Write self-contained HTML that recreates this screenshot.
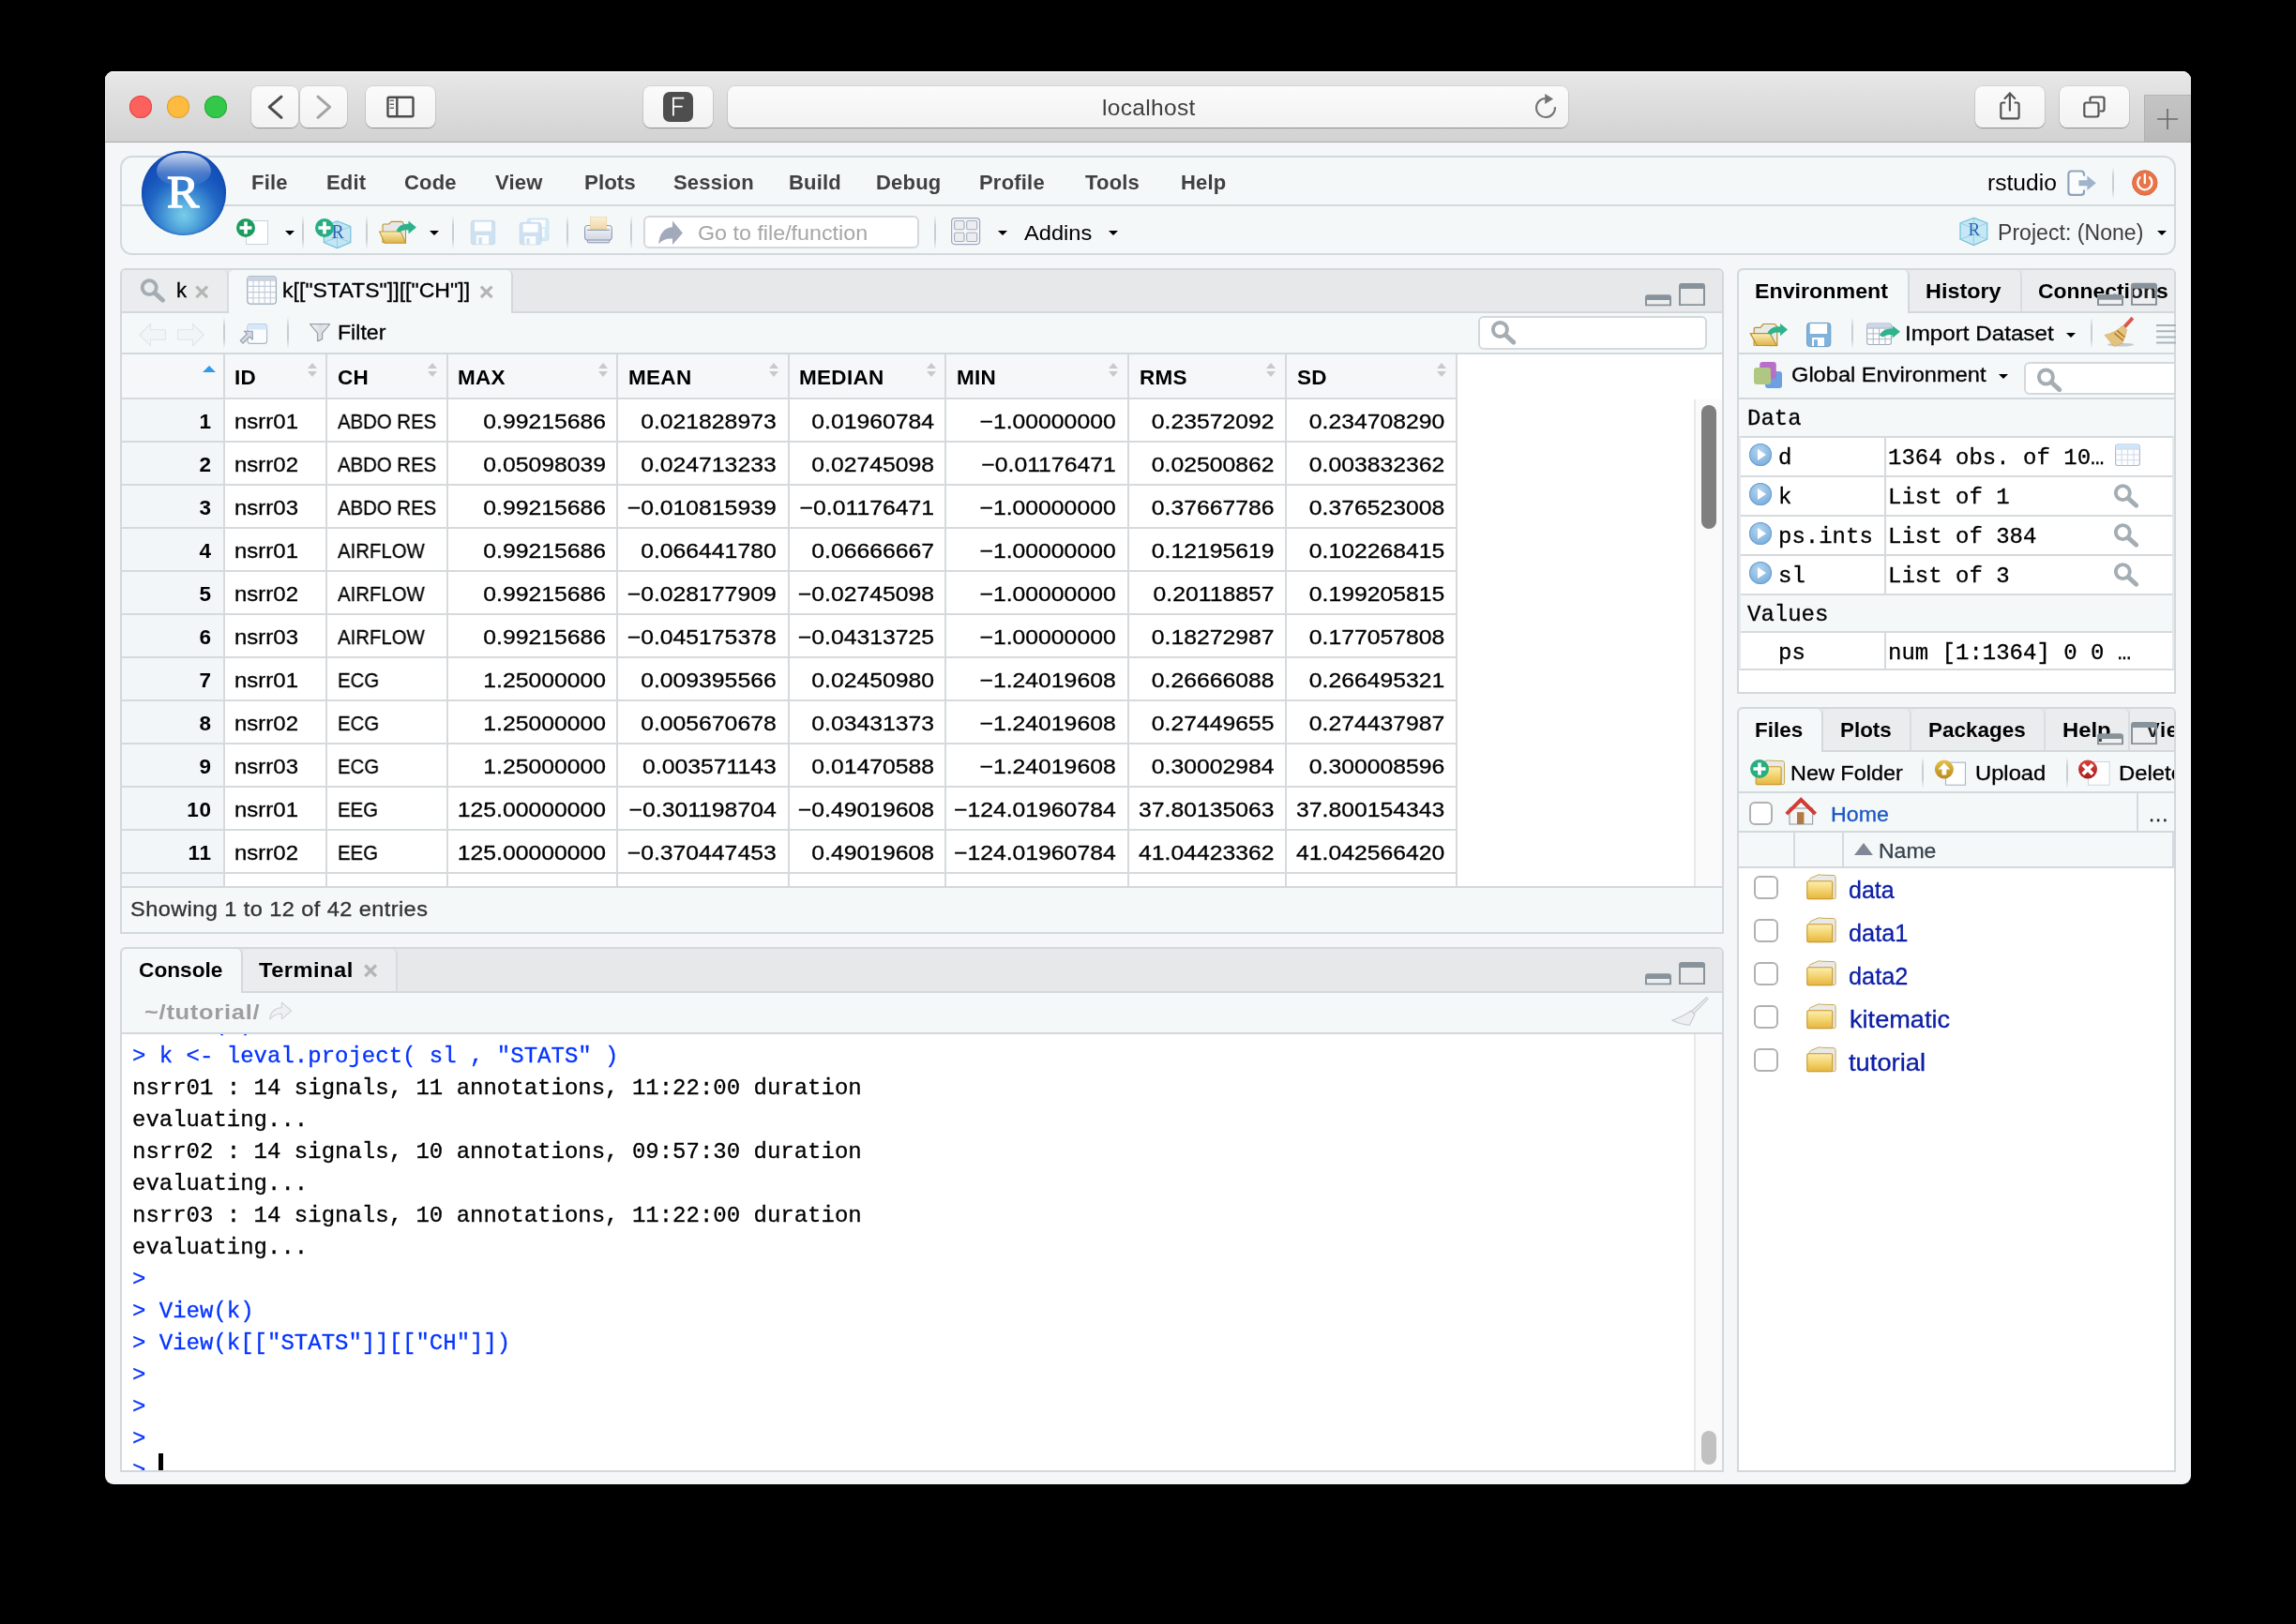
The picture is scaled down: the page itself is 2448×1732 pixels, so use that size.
<!DOCTYPE html>
<html><head><meta charset="utf-8"><title>RStudio</title>
<style>
*{box-sizing:border-box;margin:0;padding:0}
html,body{width:2448px;height:1732px;background:#000;overflow:hidden}
body{font-family:"Liberation Sans",sans-serif;position:relative;color:#000}
#w{position:absolute;left:0;top:0;width:2448px;height:1732px;background:#f4f6f8;clip-path:inset(76px 112px 149px 112px round 9px)}
.a{position:absolute}
.t,.c,.et,.fn,pre{will-change:transform}
.t{position:absolute;white-space:nowrap;line-height:1}
.mono{font-family:"Liberation Mono",monospace}
/* safari chrome */
#tb{position:absolute;left:112px;top:76px;width:2224px;height:76px;background:linear-gradient(#e9e9e9,#e3e3e3 20%,#d2d2d2);border-bottom:1px solid #a9a9a9;box-shadow:inset 0 1.5px 0 #f7f7f7,inset 1px 0 0 #efefef}
.sb{position:absolute;top:92px;height:44px;border-radius:8px;background:linear-gradient(#fbfbfb,#f2f2f2);box-shadow:0 1px 1px rgba(0,0,0,.28),0 0 0 1px rgba(0,0,0,.07)}
/* rstudio */
.pn{position:absolute;border:2px solid #d3d8dc;border-radius:6px 6px 0 0;background:#fff;overflow:hidden}
.tabbar{position:absolute;left:0;top:0;right:0;height:46px;background:#e6e8ea;border-bottom:2px solid #d3d8dc}
.tab{position:absolute;top:0;height:46px;border-right:2px solid #d9dcdf;background:#ebeced;border-radius:6px 6px 0 0}
.tab.on{background:#f4f8f9;border-right:2px solid #d3d8dc}
.bar{position:absolute;left:0;right:0;background:#f4f8f9;border-bottom:2px solid #d3d8dc}
.sep{position:absolute;width:2px;background:linear-gradient(rgba(200,205,210,0),#c9ced3 30%,#c9ced3 70%,rgba(200,205,210,0))}
.tri{position:absolute;width:0;height:0;border-left:5.3px solid transparent;border-right:5.3px solid transparent;border-top:5.6px solid #000}
.ui{font-size:22px;letter-spacing:.9px}
.ui,.c,.fn,.et,pre{-webkit-text-stroke:.3px}
.b,.c.h{font-weight:bold;-webkit-text-stroke:0}
</style></head>
<body>
<div id="w">
<!-- Safari title bar -->
<div id="tb"></div>
<div class="a" style="left:138px;top:102px;width:24px;height:24px;border-radius:50%;background:#fc615d;box-shadow:inset 0 0 0 1px #df4744"></div>
<div class="a" style="left:178px;top:102px;width:24px;height:24px;border-radius:50%;background:#fdbc40;box-shadow:inset 0 0 0 1px #de9f34"></div>
<div class="a" style="left:218px;top:102px;width:24px;height:24px;border-radius:50%;background:#34c84a;box-shadow:inset 0 0 0 1px #27aa35"></div>
<div class="sb" style="left:268px;width:50px"></div>
<div class="sb" style="left:320px;width:50px"></div>
<div class="sb" style="left:390px;width:74px"></div>
<div class="sb" style="left:686px;width:74px"></div>
<div class="sb" style="left:776px;width:896px"></div>
<div class="sb" style="left:2106px;width:74px"></div>
<div class="sb" style="left:2196px;width:74px"></div>
<div class="a" style="left:2286px;top:101px;width:50px;height:50px;background:linear-gradient(#c4c4c4,#b9b9b9);border-left:1px solid #b0b0b0;border-top:1px solid #b4b4b4"></div>
<svg class="a" style="left:112px;top:76px" width="2224" height="76" viewBox="112 76 2224 76" fill="none">
 <path d="M300 103.2 L287.2 114.2 L300 125.3" stroke="#4c4c4c" stroke-width="3" stroke-linecap="round" stroke-linejoin="round"/>
 <path d="M339 103.2 L351.6 114.2 L339 125.3" stroke="#a3a3a3" stroke-width="3" stroke-linecap="round" stroke-linejoin="round"/>
 <rect x="413.5" y="103.8" width="27" height="20.5" rx="1.5" stroke="#4c4c4c" stroke-width="2.4"/>
 <path d="M423.3 104 V124" stroke="#4c4c4c" stroke-width="2.4"/>
 <path d="M415.6 107.2 H420 M415.6 111.2 H420 M415.6 115.2 H420" stroke="#6a6a6a" stroke-width="1.6"/>
 <rect x="707" y="98" width="32" height="32" rx="7" fill="#4e4e4e"/>
 <path d="M717.9 123.6 V104.7 H729.3 M717.9 113.6 H727.7" stroke="#fff" stroke-width="1.8"/>
 <!-- reload -->
 <path d="M1657.96 114.1 A10 10 0 1 1 1647.6 105" stroke="#747474" stroke-width="2.1"/>
 <path d="M1647.2 99.9 L1656.1 105.4 L1647.2 111 Z" fill="#747474"/>
 <!-- share -->
 <path d="M2138.2 109.5 H2135.3 q-2 0 -2 2 V124.4 q0 2 2 2 H2150.6 q2 0 2 -2 V111.5 q0 -2 -2 -2 H2147.600" stroke="#555" stroke-width="2.200"/>
 <path d="M2142.9 117.700 V99.400 M2137.600 104.900 L2142.900 99.400 L2148.200 104.900" stroke="#555" stroke-width="2.200" stroke-linecap="round" stroke-linejoin="round"/>
 <!-- tabs -->
 <path d="M2228.500 107.600 V105.500 q0 -2 2 -2 H2241.500 q2 0 2 2 V116.500 q0 2 -2 2 H2239.600" stroke="#555" stroke-width="2.200" stroke-linecap="round"/>
 <rect x="2222.300" y="109.500" width="15.200" height="15" rx="2.200" stroke="#555" stroke-width="2.200"/>
 <!-- plus -->
 <path d="M2300 127 H2322 M2311 116 V138" stroke="#6c6c6c" stroke-width="1.7"/>
</svg>
<div class="t" id="url" style="left:1175px;top:103px;font-size:24.5px;color:#3f3f3f;letter-spacing:.32px">localhost</div>
<!-- RStudio main toolbar -->
<div class="a" style="left:128px;top:166px;width:2192px;height:106px;border:2px solid #d3d8dc;border-radius:13px;background:#f4f8f9"></div>
<div class="a" style="left:130px;top:218px;width:2188px;height:2px;background:#d3d8dc"></div>
<!-- R logo -->
<div class="a" style="left:151px;top:161px;width:90px;height:90px;border-radius:50%;background:radial-gradient(circle at 50% 76%,#78cde9 0%,#60b5e1 13%,#3d8cd3 30%,#2166c5 46%,#1653bb 62%,#1049b2 100%);box-shadow:inset 0 0 3px #0b3f9e"></div>
<div class="a" style="left:167px;top:163px;width:58px;height:36px;border-radius:50%/55% 55% 45% 45%;background:linear-gradient(rgba(255,255,255,.78),rgba(255,255,255,.22) 60%,rgba(255,255,255,.04))"></div>
<div class="t" style="left:178.200px;top:180px;font-family:'Liberation Serif',serif;font-size:49px;color:#fff;-webkit-text-stroke:1.300px #fff;transform:scaleX(1.05);transform-origin:0 50%">R</div>
<!-- menus -->
<div class="t b m" style="left:268px">File</div>
<div class="t b m" style="left:348px">Edit</div>
<div class="t b m" style="left:431px">Code</div>
<div class="t b m" style="left:528px">View</div>
<div class="t b m" style="left:623px;letter-spacing:0;transform:scaleX(1.019);transform-origin:0 50%">Plots</div>
<div class="t b m" style="left:718px">Session</div>
<div class="t b m" style="left:841px">Build</div>
<div class="t b m" style="left:934px">Debug</div>
<div class="t b m" style="left:1044px">Profile</div>
<div class="t b m" style="left:1157px">Tools</div>
<div class="t b m" style="left:1259px">Help</div>
<style>.m{top:184px;font-size:22px;color:#404040;letter-spacing:.2px}</style>
<div class="t" style="left:2119px;top:184px;font-size:23px;letter-spacing:0;transform:scaleX(1.07);transform-origin:0 50%">rstudio</div>
<div class="t" style="left:2130px;top:236.5px;font-size:23px;letter-spacing:.05px;color:#3c3c3c">Project: (None)</div>
<div class="tri" style="left:2299.7px;top:246px"></div>
<div class="sep" style="left:2252px;top:178px;height:34px"></div>
<!-- second row separators -->
<div class="sep" style="left:322px;top:230px;height:36px"></div>
<div class="sep" style="left:390px;top:230px;height:36px"></div>
<div class="sep" style="left:482px;top:230px;height:36px"></div>
<div class="sep" style="left:604px;top:230px;height:36px"></div>
<div class="sep" style="left:672px;top:230px;height:36px"></div>
<div class="sep" style="left:996px;top:230px;height:36px"></div>
<div class="tri" style="left:303.7px;top:246px"></div>
<div class="tri" style="left:457.7px;top:246px"></div>
<div class="tri" style="left:1063.7px;top:246px"></div>
<div class="tri" style="left:1181.7px;top:246px"></div>
<div class="a" style="left:686px;top:229.5px;width:294px;height:35.5px;border:2px solid #d3d8dc;border-radius:6px;background:#fff"></div>
<div class="t" style="left:744px;top:238px;font-size:22px;color:#a6a6a6;letter-spacing:0;transform:scaleX(1.058);transform-origin:0 50%">Go to file/function</div>
<div class="t" style="left:1092px;top:237.5px;font-size:22.5px;letter-spacing:0;transform:scaleX(1.051);transform-origin:0 50%">Addins</div>
<svg class="a" style="left:240px;top:225px" width="2090" height="46" viewBox="240 225 2090 46" fill="none">
<defs>
 <linearGradient id="gFold" x1="0" y1="0" x2="0" y2="1"><stop offset="0" stop-color="#f9eeb8"/><stop offset="1" stop-color="#deb044"/></linearGradient>
 <linearGradient id="gPrn" x1="0" y1="0" x2="0" y2="1"><stop offset="0" stop-color="#f6f8fb"/><stop offset="1" stop-color="#cfd5e2"/></linearGradient>
 <linearGradient id="gPap" x1="0" y1="0" x2="0" y2="1"><stop offset="0" stop-color="#fbf0d8"/><stop offset="1" stop-color="#eed6a4"/></linearGradient>
 <g id="plusG"><circle r="10" /><path d="M-6.5 0 H6.5 M0 -6.5 V6.5" stroke="#fff" stroke-width="3.6"/></g>
</defs>
<!-- new file -->
<rect x="262.5" y="235.5" width="23" height="25" fill="#fff" stroke="#c9d2de" stroke-width="1"/>
<use href="#plusG" x="262" y="243" fill="#1d9b5e"/>
<!-- new project -->
<path d="M359.5 235.8 L373.8 241.5 V258.5 L359.5 264.6 L345.3 258.5 V241.5 Z" fill="#c4e6f4" stroke="#72c2de" stroke-width="1.2"/>
<path d="M345.3 241.5 L359.5 247.5 L373.8 241.5 M359.5 247.5 V264.6 M345.3 258.5 L359.5 253 L373.8 258.5 M359.5 235.8 V253" stroke="#8ccde4" stroke-width=".9"/>
<text x="353.6" y="254.3" font-family="Liberation Serif" font-size="20" fill="#2c63b4">R</text>
<use href="#plusG" x="346" y="243" fill="#27ae80"/>
<!-- open folder -->
<path d="M408 258.5 V240.3 q0-1.3 1.3-1.3 h5.4 l2.6-2.6 h10.4 q1.8 0 2.3 1.6 l.9 2.6 h1.6 v18 z" fill="#e7e7e7" stroke="#bb9430" stroke-width="1.1"/>
<path d="M404.6 247 H427.2 L432.6 259.3 H410 Z" fill="url(#gFold)" stroke="#c39b2e" stroke-width="1.1"/>
<path d="M422.4 246.200 Q426.500 238 435.500 238.800 V235.600 L443.900 242.400 L435.500 249.400 V245.600 Q429.500 244.400 425.800 247.800 Z" fill="#2db38b"/>
<!-- save (disabled) -->
<rect x="502.3" y="235.3" width="25.4" height="25.4" rx="2.5" fill="#cfe0f0" stroke="#c3d6ea" stroke-width=".8"/>
<rect x="506" y="236.6" width="18" height="10" fill="#fbfdfe"/>
<rect x="507.8" y="251" width="13.4" height="9.4" fill="#fbfdfe"/>
<rect x="510.2" y="253.2" width="3.7" height="7.2" fill="#cfe0f0"/>
<!-- save all (disabled) -->
<rect x="562.3" y="233" width="22.6" height="23.6" rx="2.5" fill="#d3ebf5" stroke="#c6dfee" stroke-width=".8"/>
<rect x="566" y="234.4" width="15.6" height="8" fill="#fbfdfe"/>
<rect x="578" y="244" width="2.6" height="9" fill="#fbfdfe"/>
<rect x="554.2" y="237.4" width="22.8" height="23.4" rx="2.5" fill="#cfe0f0" stroke="#c3d6ea" stroke-width=".8"/>
<rect x="557.6" y="238.8" width="16" height="9" fill="#fbfdfe"/>
<rect x="559.3" y="252" width="12" height="8.500" fill="#fbfdfe"/>
<rect x="561.400" y="254.2" width="3.200" height="6.300" fill="#cfe0f0"/>
<!-- print -->
<rect x="626.3" y="255" width="23.500" height="3.800" rx="1" fill="#dfe3ec" stroke="#8492ab" stroke-width="1"/>
<path d="M623.600 243.200 q0-2.700 2.700-2.700 h23.300 q2.700 0 2.700 2.700 v10.600 q0 2.200 -2.200 2.200 h-24.300 q-2.200 0 -2.200-2.200z" fill="url(#gPrn)" stroke="#8492ab" stroke-width="1"/>
<rect x="629.300" y="231.300" width="17.500" height="13.700" fill="url(#gPap)" stroke="#e8cf9c" stroke-width=".6"/>
<path d="M626 245.300 H650" stroke="#8492ab" stroke-width="1"/>
<!-- goto arrow -->
<path d="M702.2 260.2 Q703.4 243.6 717 241.9 V235.5 L727.9 248.5 L717 261 V254.5 Q707.6 253.7 702.2 260.2 Z" fill="#a2a9ba"/>
<!-- grid -->
<rect x="1014.600" y="232.600" width="30" height="28" rx="3.500" fill="#f4f6f8" stroke="#9eabbc" stroke-width="1.2"/>
<g fill="#ededf0" stroke="#a3afbf" stroke-width="1.1"><rect x="1017.600" y="235.500" width="10.400" height="9.300" rx="1.500"/><rect x="1030.700" y="235.500" width="11" height="9.300" rx="1.500"/><rect x="1017.600" y="248.200" width="10.400" height="9.300" rx="1.500"/><rect x="1030.700" y="248.200" width="11" height="9.300" rx="1.500"/></g>
</svg>
<!-- Source panel -->
<div class="pn" id="src" style="left:128px;top:286px;width:1710px;height:710px">
<div class="tabbar" style="height:45.5px"></div>
<div class="tab" style="left:0;width:114px;height:43.500px"></div>
<div class="tab on" style="left:114px;width:303px;height:46px"></div>
<div class="t ui" style="left:57.6px;top:11px;letter-spacing:0">k</div>
<div class="t ui" id="tabt" style="left:171px;top:11px;letter-spacing:0;transform:scaleX(1.05);transform-origin:0 50%">k[["STATS"]][["CH"]]</div>
<div class="bar" style="top:45.5px;height:44.500px"></div>
<div class="sep" style="left:108px;top:50px;height:34px"></div>
<div class="sep" style="left:176px;top:50px;height:34px"></div>
<div class="t ui" style="left:230px;top:56px;letter-spacing:0;transform:scaleX(1.051);transform-origin:0 50%">Filter</div>
<div class="a" style="left:1446px;top:49px;width:244px;height:36px;border:2px solid #d3d8dc;border-radius:6px;background:#fff"></div>
<div class="a" style="left:0;top:90px;width:1423.6px;height:46px;background:#f6f7f9"></div>
<div class="a" style="left:0;top:136px;width:108px;height:522px;background:#f3f6f8"></div>
<div class="a hl" style="top:135.9px"></div>
<div class="a hl" style="top:181.9px"></div>
<div class="a hl" style="top:227.9px"></div>
<div class="a hl" style="top:273.9px"></div>
<div class="a hl" style="top:319.9px"></div>
<div class="a hl" style="top:365.9px"></div>
<div class="a hl" style="top:411.9px"></div>
<div class="a hl" style="top:457.9px"></div>
<div class="a hl" style="top:503.9px"></div>
<div class="a hl" style="top:549.9px"></div>
<div class="a hl" style="top:595.9px"></div>
<div class="a hl" style="top:641.9px"></div>
<div class="a vl" style="left:107.5px"></div>
<div class="a vl" style="left:217.3px"></div>
<div class="a vl" style="left:345.5px"></div>
<div class="a vl" style="left:527.3px"></div>
<div class="a vl" style="left:709.7px"></div>
<div class="a vl" style="left:877.4px"></div>
<div class="a vl" style="left:1071.8px"></div>
<div class="a vl" style="left:1240px"></div>
<div class="a vl" style="left:1422px"></div>
<style>.hl{left:0;width:1423.6px;height:2px;background:#d6dadd}.vl{top:90px;width:2px;height:568px;background:#d6dadd}.c{position:absolute;white-space:nowrap;line-height:1;font-size:22.5px}.n{text-align:right;transform:scaleX(1.1);transform-origin:100% 50%}.lc{transform:scaleX(1.066);transform-origin:0 50%}.uc{transform:scaleX(.905);transform-origin:0 50%}.h{font-weight:bold;letter-spacing:.3px}.so{position:absolute;width:0;height:0;border-left:5.500px solid transparent;border-right:5.500px solid transparent}.su{border-bottom:6px solid #c9c9c9}.sd{border-top:6px solid #c9c9c9}</style>
<div class="c h" style="left:120.2px;top:103.5px">ID</div>
<div class="so su" style="left:197.7px;top:98.8px"></div><div class="so sd" style="left:197.7px;top:108px"></div>
<div class="c h" style="left:230.0px;top:103.5px">CH</div>
<div class="so su" style="left:325.9px;top:98.8px"></div><div class="so sd" style="left:325.9px;top:108px"></div>
<div class="c h" style="left:358.2px;top:103.5px">MAX</div>
<div class="so su" style="left:507.7px;top:98.8px"></div><div class="so sd" style="left:507.7px;top:108px"></div>
<div class="c h" style="left:540.0px;top:103.5px">MEAN</div>
<div class="so su" style="left:690.1px;top:98.8px"></div><div class="so sd" style="left:690.1px;top:108px"></div>
<div class="c h" style="left:722.4px;top:103.5px">MEDIAN</div>
<div class="so su" style="left:857.8px;top:98.8px"></div><div class="so sd" style="left:857.8px;top:108px"></div>
<div class="c h" style="left:890.1px;top:103.5px">MIN</div>
<div class="so su" style="left:1052.2px;top:98.8px"></div><div class="so sd" style="left:1052.2px;top:108px"></div>
<div class="c h" style="left:1084.5px;top:103.5px">RMS</div>
<div class="so su" style="left:1220.4px;top:98.8px"></div><div class="so sd" style="left:1220.4px;top:108px"></div>
<div class="c h" style="left:1252.7px;top:103.5px">SD</div>
<div class="so su" style="left:1402.4px;top:98.8px"></div><div class="so sd" style="left:1402.4px;top:108px"></div>
<div class="so" style="left:85.8px;top:102.2px;border-left-width:7.2px;border-right-width:7.2px;border-bottom:7.800px solid #2d9bf0"></div>
<div class="c b" style="left:0;width:95.6px;top:151.4px;text-align:right;letter-spacing:.6px">1</div>
<div class="c lc" style="left:119.9px;top:151.4px">nsrr01</div>
<div class="c uc" style="left:229.5px;top:151.4px">ABDO RES</div>
<div class="c n" style="left:346.5px;width:169.1px;top:151.4px">0.99215686</div>
<div class="c n" style="left:528.3px;width:169.7px;top:151.4px">0.021828973</div>
<div class="c n" style="left:710.7px;width:155.0px;top:151.4px">0.01960784</div>
<div class="c n" style="left:878.4px;width:181.7px;top:151.4px">−1.00000000</div>
<div class="c n" style="left:1072.8px;width:155.5px;top:151.4px">0.23572092</div>
<div class="c n" style="left:1241px;width:169.3px;top:151.4px">0.234708290</div>
<div class="c b" style="left:0;width:95.6px;top:197.4px;text-align:right;letter-spacing:.6px">2</div>
<div class="c lc" style="left:119.9px;top:197.4px">nsrr02</div>
<div class="c uc" style="left:229.5px;top:197.4px">ABDO RES</div>
<div class="c n" style="left:346.5px;width:169.1px;top:197.4px">0.05098039</div>
<div class="c n" style="left:528.3px;width:169.7px;top:197.4px">0.024713233</div>
<div class="c n" style="left:710.7px;width:155.0px;top:197.4px">0.02745098</div>
<div class="c n" style="left:878.4px;width:181.7px;top:197.4px">−0.01176471</div>
<div class="c n" style="left:1072.8px;width:155.5px;top:197.4px">0.02500862</div>
<div class="c n" style="left:1241px;width:169.3px;top:197.4px">0.003832362</div>
<div class="c b" style="left:0;width:95.6px;top:243.4px;text-align:right;letter-spacing:.6px">3</div>
<div class="c lc" style="left:119.9px;top:243.4px">nsrr03</div>
<div class="c uc" style="left:229.5px;top:243.4px">ABDO RES</div>
<div class="c n" style="left:346.5px;width:169.1px;top:243.4px">0.99215686</div>
<div class="c n" style="left:528.3px;width:169.7px;top:243.4px">−0.010815939</div>
<div class="c n" style="left:710.7px;width:155.0px;top:243.4px">−0.01176471</div>
<div class="c n" style="left:878.4px;width:181.7px;top:243.4px">−1.00000000</div>
<div class="c n" style="left:1072.8px;width:155.5px;top:243.4px">0.37667786</div>
<div class="c n" style="left:1241px;width:169.3px;top:243.4px">0.376523008</div>
<div class="c b" style="left:0;width:95.6px;top:289.4px;text-align:right;letter-spacing:.6px">4</div>
<div class="c lc" style="left:119.9px;top:289.4px">nsrr01</div>
<div class="c uc" style="left:229.5px;top:289.4px">AIRFLOW</div>
<div class="c n" style="left:346.5px;width:169.1px;top:289.4px">0.99215686</div>
<div class="c n" style="left:528.3px;width:169.7px;top:289.4px">0.066441780</div>
<div class="c n" style="left:710.7px;width:155.0px;top:289.4px">0.06666667</div>
<div class="c n" style="left:878.4px;width:181.7px;top:289.4px">−1.00000000</div>
<div class="c n" style="left:1072.8px;width:155.5px;top:289.4px">0.12195619</div>
<div class="c n" style="left:1241px;width:169.3px;top:289.4px">0.102268415</div>
<div class="c b" style="left:0;width:95.6px;top:335.4px;text-align:right;letter-spacing:.6px">5</div>
<div class="c lc" style="left:119.9px;top:335.4px">nsrr02</div>
<div class="c uc" style="left:229.5px;top:335.4px">AIRFLOW</div>
<div class="c n" style="left:346.5px;width:169.1px;top:335.4px">0.99215686</div>
<div class="c n" style="left:528.3px;width:169.7px;top:335.4px">−0.028177909</div>
<div class="c n" style="left:710.7px;width:155.0px;top:335.4px">−0.02745098</div>
<div class="c n" style="left:878.4px;width:181.7px;top:335.4px">−1.00000000</div>
<div class="c n" style="left:1072.8px;width:155.5px;top:335.4px">0.20118857</div>
<div class="c n" style="left:1241px;width:169.3px;top:335.4px">0.199205815</div>
<div class="c b" style="left:0;width:95.6px;top:381.4px;text-align:right;letter-spacing:.6px">6</div>
<div class="c lc" style="left:119.9px;top:381.4px">nsrr03</div>
<div class="c uc" style="left:229.5px;top:381.4px">AIRFLOW</div>
<div class="c n" style="left:346.5px;width:169.1px;top:381.4px">0.99215686</div>
<div class="c n" style="left:528.3px;width:169.7px;top:381.4px">−0.045175378</div>
<div class="c n" style="left:710.7px;width:155.0px;top:381.4px">−0.04313725</div>
<div class="c n" style="left:878.4px;width:181.7px;top:381.4px">−1.00000000</div>
<div class="c n" style="left:1072.8px;width:155.5px;top:381.4px">0.18272987</div>
<div class="c n" style="left:1241px;width:169.3px;top:381.4px">0.177057808</div>
<div class="c b" style="left:0;width:95.6px;top:427.4px;text-align:right;letter-spacing:.6px">7</div>
<div class="c lc" style="left:119.9px;top:427.4px">nsrr01</div>
<div class="c uc" style="left:229.5px;top:427.4px">ECG</div>
<div class="c n" style="left:346.5px;width:169.1px;top:427.4px">1.25000000</div>
<div class="c n" style="left:528.3px;width:169.7px;top:427.4px">0.009395566</div>
<div class="c n" style="left:710.7px;width:155.0px;top:427.4px">0.02450980</div>
<div class="c n" style="left:878.4px;width:181.7px;top:427.4px">−1.24019608</div>
<div class="c n" style="left:1072.8px;width:155.5px;top:427.4px">0.26666088</div>
<div class="c n" style="left:1241px;width:169.3px;top:427.4px">0.266495321</div>
<div class="c b" style="left:0;width:95.6px;top:473.4px;text-align:right;letter-spacing:.6px">8</div>
<div class="c lc" style="left:119.9px;top:473.4px">nsrr02</div>
<div class="c uc" style="left:229.5px;top:473.4px">ECG</div>
<div class="c n" style="left:346.5px;width:169.1px;top:473.4px">1.25000000</div>
<div class="c n" style="left:528.3px;width:169.7px;top:473.4px">0.005670678</div>
<div class="c n" style="left:710.7px;width:155.0px;top:473.4px">0.03431373</div>
<div class="c n" style="left:878.4px;width:181.7px;top:473.4px">−1.24019608</div>
<div class="c n" style="left:1072.8px;width:155.5px;top:473.4px">0.27449655</div>
<div class="c n" style="left:1241px;width:169.3px;top:473.4px">0.274437987</div>
<div class="c b" style="left:0;width:95.6px;top:519.4px;text-align:right;letter-spacing:.6px">9</div>
<div class="c lc" style="left:119.9px;top:519.4px">nsrr03</div>
<div class="c uc" style="left:229.5px;top:519.4px">ECG</div>
<div class="c n" style="left:346.5px;width:169.1px;top:519.4px">1.25000000</div>
<div class="c n" style="left:528.3px;width:169.7px;top:519.4px">0.003571143</div>
<div class="c n" style="left:710.7px;width:155.0px;top:519.4px">0.01470588</div>
<div class="c n" style="left:878.4px;width:181.7px;top:519.4px">−1.24019608</div>
<div class="c n" style="left:1072.8px;width:155.5px;top:519.4px">0.30002984</div>
<div class="c n" style="left:1241px;width:169.3px;top:519.4px">0.300008596</div>
<div class="c b" style="left:0;width:95.6px;top:565.4px;text-align:right;letter-spacing:.6px">10</div>
<div class="c lc" style="left:119.9px;top:565.4px">nsrr01</div>
<div class="c uc" style="left:229.5px;top:565.4px">EEG</div>
<div class="c n" style="left:346.5px;width:169.1px;top:565.4px">125.00000000</div>
<div class="c n" style="left:528.3px;width:169.7px;top:565.4px">−0.301198704</div>
<div class="c n" style="left:710.7px;width:155.0px;top:565.4px">−0.49019608</div>
<div class="c n" style="left:878.4px;width:181.7px;top:565.4px">−124.01960784</div>
<div class="c n" style="left:1072.8px;width:155.5px;top:565.4px">37.80135063</div>
<div class="c n" style="left:1241px;width:169.3px;top:565.4px">37.800154343</div>
<div class="c b" style="left:0;width:95.6px;top:611.4px;text-align:right;letter-spacing:.6px">11</div>
<div class="c lc" style="left:119.9px;top:611.4px">nsrr02</div>
<div class="c uc" style="left:229.5px;top:611.4px">EEG</div>
<div class="c n" style="left:346.5px;width:169.1px;top:611.4px">125.00000000</div>
<div class="c n" style="left:528.3px;width:169.7px;top:611.4px">−0.370447453</div>
<div class="c n" style="left:710.7px;width:155.0px;top:611.4px">0.49019608</div>
<div class="c n" style="left:878.4px;width:181.7px;top:611.4px">−124.01960784</div>
<div class="c n" style="left:1072.8px;width:155.5px;top:611.4px">41.04423362</div>
<div class="c n" style="left:1241px;width:169.3px;top:611.4px">41.042566420</div>
<div class="a" style="left:1676px;top:138px;width:30px;height:520px;background:#fafafa;border-left:2px solid #e8e8e8"></div>
<div class="a" style="left:1684px;top:144px;width:16px;height:132px;border-radius:8px;background:#7f7f7f"></div>
<div class="a" style="left:0;top:657px;width:1706px;height:52px;background:#f4f8f9;border-top:2px solid #d3d8dc"></div>
<div class="t ui" id="foot" style="left:9.3px;top:671px;color:#333;letter-spacing:.4px;transform:scaleX(1.07);transform-origin:0 50%">Showing 1 to 12 of 42 entries</div>
</div>
<!-- Console panel -->
<div class="pn" id="con" style="left:128px;top:1010px;width:1710px;height:560px">
<div class="tabbar" style="height:46.5px"></div>
<div class="tab on" style="left:0;width:128.5px;height:47px"></div>
<div class="tab" style="left:128.5px;width:165.5px;height:44.5px"></div>
<div class="t b ct" style="left:17.5px;top:11.5px;letter-spacing:0;transform:scaleX(1.031);transform-origin:0 50%">Console</div>
<div class="t b ct" style="left:145.8px;top:11.5px;letter-spacing:.4px;transform:scaleX(1.08);transform-origin:0 50%">Terminal</div>
<style>.ct{font-size:22px;letter-spacing:.45px}</style>
<div class="bar" style="top:46.5px;height:44px"></div>
<div class="t b" id="cpath" style="left:24.3px;top:56.5px;font-size:22px;color:#9e9e9e;letter-spacing:.6px;transform:scaleX(1.16);transform-origin:0 50%">~/tutorial/</div>
<div class="a" style="left:0;top:90.5px;width:1706px;height:468px;background:#fff;overflow:hidden">
<pre class="mono" id="ctext" style="position:absolute;left:11.0px;top:-26.5px;font-size:24px;line-height:34px;color:#000;font-family:'Liberation Mono',monospace"><span class="bl">&gt; View(k)
&gt; k &lt;- leval.project( sl , "STATS" )</span>
nsrr01 : 14 signals, 11 annotations, 11:22:00 duration
evaluating...
nsrr02 : 14 signals, 10 annotations, 09:57:30 duration
evaluating...
nsrr03 : 14 signals, 10 annotations, 11:22:00 duration
evaluating...
<span class="bl">&gt; 
&gt; View(k)
&gt; View(k[["STATS"]][["CH"]])
&gt; 
&gt; 
&gt; 
&gt; </span></pre>
<style>.bl{color:#0433ff}</style>
<div class="a" style="left:39.3px;top:447.5px;width:4.4px;height:30px;background:#000"></div>
<div class="a" style="left:1676.0px;top:0;width:30px;height:468px;background:#fafafa;border-left:2px solid #e8e8e8"></div>
<div class="a" style="left:1684.0px;top:423.300px;width:16px;height:36.200px;border-radius:8px;background:#c1c1c1"></div>
</div>
</div>
<!-- Environment panel -->
<div class="pn" id="env" style="left:1852px;top:286px;width:468px;height:454px">
<!-- origin (1854,288) -->
<div class="tabbar" style="height:45.5px"></div>
<div class="tab on" style="left:0;width:181.5px;height:46px"></div>
<div class="tab" style="left:181.5px;width:120px;height:43.5px"></div>
<div class="tab" style="left:301.5px;width:170px;height:43.5px;border-right:0"></div>
<div class="t b" style="left:17.3px;top:12px;font-size:22px;letter-spacing:0;transform:scaleX(1.056);transform-origin:0 50%">Environment</div>
<div class="t b" style="left:199.2px;top:12px;font-size:22px;letter-spacing:0;transform:scaleX(1.063);transform-origin:0 50%">History</div>
<div class="t b" style="left:319.2px;top:12px;font-size:22px;letter-spacing:0;transform:scaleX(1.041);transform-origin:0 50%">Connections</div>
<div class="bar" style="top:45.5px;height:44.5px"></div>
<div class="sep" style="left:120px;top:50px;height:34px"></div>
<div class="sep" style="left:374.5px;top:50px;height:34px"></div>
<div class="t ui" style="left:177px;top:56.5px;letter-spacing:0;font-size:22.5px;transform:scaleX(1.075);transform-origin:0 50%">Import Dataset</div>
<div class="tri" style="left:348.9px;top:67px"></div>
<div class="bar" style="top:90px;height:48px"></div>
<div class="t ui" style="left:56px;top:101px;letter-spacing:0;font-size:22.5px;transform:scaleX(1.05);transform-origin:0 50%">Global Environment</div>
<div class="tri" style="left:276.800px;top:111.400px"></div>
<div class="a" style="left:303.5px;top:98px;width:180px;height:35px;border:2px solid #d3d8dc;border-radius:6px;background:#fff"></div>
<!-- rows; row tops relative: Data 137(425), d 178(466), k 220, ps.ints 262, sl 304, Values 346(634), ps 386(674), end 426(714) -->
<div class="a" style="left:0;top:138px;width:464px;height:288px;background:#fff"></div>
<div class="a er" style="top:138px;height:40px"></div>
<div class="a er" style="top:346px;height:40px"></div>
<style>.er{left:0;width:464px;background:#f4f8f9}.el{position:absolute;left:0;width:464px;height:2px;background:#d6dadd}.ev{position:absolute;left:155px;width:2px;background:#d6dadd}
.et{position:absolute;white-space:nowrap;line-height:1;font-family:"Liberation Mono",monospace;font-size:24px}
.pl{position:absolute;width:24px;height:24px;border-radius:50%;background:radial-gradient(circle at 45% 35%,#b8d6ef,#7fb2de 70%,#6aa0d0);box-shadow:inset 0 0 0 1px #6b9fd0}
.pl:after{content:"";position:absolute;left:8.5px;top:5.500px;border-left:9px solid #fff;border-top:6.500px solid transparent;border-bottom:6.500px solid transparent}</style>
<div class="el" style="top:177px"></div><div class="el" style="top:219px"></div><div class="el" style="top:261px"></div><div class="el" style="top:303px"></div><div class="el" style="top:345px"></div><div class="el" style="top:385px"></div><div class="el" style="top:425px"></div>
<div class="ev" style="top:178px;height:168px"></div><div class="ev" style="top:386px;height:40px"></div>
<div class="a" style="left:0;top:178px;width:2px;height:248px;background:#e4e8ea"></div>
<div class="a" style="left:462px;top:178px;width:2px;height:248px;background:#e4e8ea"></div>
<div class="et" style="left:9px;top:147px">Data</div>
<div class="et" style="left:9px;top:356px">Values</div>
<div class="pl" style="left:11px;top:185px"></div><div class="et" style="left:42px;top:188.5px">d</div><div class="et" style="left:159px;top:188.5px">1364 obs. of 10…</div>
<div class="pl" style="left:11px;top:227px"></div><div class="et" style="left:42px;top:230.5px">k</div><div class="et" style="left:159px;top:230.5px">List of 1</div>
<div class="pl" style="left:11px;top:269px"></div><div class="et" style="left:42px;top:272.5px">ps.ints</div><div class="et" style="left:159px;top:272.5px">List of 384</div>
<div class="pl" style="left:11px;top:311px"></div><div class="et" style="left:42px;top:314.5px">sl</div><div class="et" style="left:159px;top:314.5px">List of 3</div>
<div class="et" style="left:42px;top:396.5px">ps</div><div class="et" style="left:159px;top:396.5px">num [1:1364] 0 0 …</div>
</div>
<!-- Files panel -->
<div class="pn" id="fil" style="left:1852px;top:754px;width:468px;height:816px">
<!-- origin (1854,756) -->
<div class="tabbar" style="height:46px"></div>
<div class="tab on" style="left:0;width:89.5px;height:47px"></div>
<div class="tab" style="left:89.5px;width:94px;height:44px"></div>
<div class="tab" style="left:183.5px;width:143px;height:44px"></div>
<div class="tab" style="left:326.5px;width:90px;height:44px"></div>
<div class="tab" style="left:416.5px;width:60px;height:44px;border-right:0"></div>
<div class="t b ft" style="left:17.3px;letter-spacing:0;transform:scaleX(1.02);transform-origin:0 50%">Files</div>
<div class="t b ft" style="left:107.5px;letter-spacing:0;transform:scaleX(1.019);transform-origin:0 50%">Plots</div>
<div class="t b ft" style="left:201.6px;letter-spacing:0;transform:scaleX(1.021);transform-origin:0 50%">Packages</div>
<div class="t b ft" style="left:344.8px;letter-spacing:0;transform:scaleX(1.082);transform-origin:0 50%">Help</div>
<div class="t b ft" style="left:433.5px">Viewer</div>
<style>.ft{top:12px;font-size:22px;letter-spacing:.7px}</style>
<div class="bar" style="top:46px;height:44px"></div>
<div class="sep" style="left:195px;top:51px;height:34px"></div>
<div class="sep" style="left:348.5px;top:51px;height:34px"></div>
<div class="t ui" style="left:55px;top:57.5px;font-size:22.5px;letter-spacing:0;transform:scaleX(1.041);transform-origin:0 50%">New Folder</div>
<div class="t ui" style="left:252.3px;top:57.5px;font-size:22.5px;letter-spacing:0;transform:scaleX(1.056);transform-origin:0 50%">Upload</div>
<div class="t ui" style="left:405.3px;top:57.5px;font-size:22.5px;letter-spacing:0;transform:scaleX(1.061);transform-origin:0 50%">Delete</div>
<div class="bar" style="top:90px;height:42px"></div>
<div class="a" style="left:424px;top:90px;width:2px;height:40px;background:#d6dadd"></div>
<div class="a cb" style="left:10.5px;top:98.5px"></div>
<div class="t ui" style="left:98px;top:101.5px;font-size:22.5px;letter-spacing:0;color:#1b56c4;transform:scaleX(1.03);transform-origin:0 50%">Home</div>
<div class="t ui" style="left:436.5px;top:101.5px;font-size:22px;letter-spacing:1px;color:#222">...</div>
<div class="bar" style="top:132px;height:38px"></div>
<div class="a" style="left:58px;top:132px;width:2px;height:36px;background:#d6dadd"></div>
<div class="a" style="left:110px;top:132px;width:2px;height:36px;background:#d6dadd"></div>
<div class="a" style="left:461.5px;top:132px;width:2px;height:36px;background:#d6dadd"></div>
<div class="a" style="left:122.500px;top:143px;width:0;height:0;border-left:10px solid transparent;border-right:10px solid transparent;border-bottom:13px solid #7f8894"></div>
<div class="t ui" style="left:149.2px;top:140.5px;font-size:22.5px;letter-spacing:0;color:#36424c;transform:scaleX(1.022);transform-origin:0 50%">Name</div>
<style>.cb{width:25.5px;height:25px;border:2px solid #b1b1b1;border-radius:6px;background:#fff}
.fn{position:absolute;left:117.3px;white-space:nowrap;line-height:1;font-size:25px;letter-spacing:.7px;color:#0b1ea6}</style>
<div class="a cb" style="left:16.3px;top:178.3px"></div><div class="fn" style="top:180.500px;letter-spacing:0">data</div>
<div class="a cb" style="left:16.3px;top:224.3px"></div><div class="fn" style="top:226.500px;letter-spacing:0;transform:scaleX(1.013);transform-origin:0 50%">data1</div>
<div class="a cb" style="left:16.3px;top:270.3px"></div><div class="fn" style="top:272.500px;letter-spacing:0;transform:scaleX(1.013);transform-origin:0 50%">data2</div>
<div class="a cb" style="left:16.3px;top:316.3px"></div><div class="fn" style="top:318.500px;letter-spacing:0;left:117.5px;transform:scaleX(1.085);transform-origin:0 50%">kitematic</div>
<div class="a cb" style="left:16.3px;top:362.3px"></div><div class="fn" style="top:364.500px;letter-spacing:0;transform:scaleX(1.093);transform-origin:0 50%">tutorial</div>
</div>
<svg class="a" style="left:0;top:0;pointer-events:none" width="2448" height="1732" viewBox="0 0 2448 1732" fill="none">
<defs>
 <linearGradient id="gF2" x1="0" y1="0" x2="0" y2="1"><stop offset="0" stop-color="#f9f0bc"/><stop offset="1" stop-color="#e0b246"/></linearGradient>
 <linearGradient id="gF3" x1="0" y1="0" x2="0" y2="1"><stop offset="0" stop-color="#fbeeb0"/><stop offset=".5" stop-color="#f3d470"/><stop offset="1" stop-color="#e6b541"/></linearGradient>
 <linearGradient id="gFun" x1="0" y1="0" x2="1" y2="0"><stop offset="0" stop-color="#fdfdfd"/><stop offset=".55" stop-color="#d9dde1"/><stop offset="1" stop-color="#f4f5f6"/></linearGradient>
 <linearGradient id="gGold" x1="0" y1="0" x2="0" y2="1"><stop offset="0" stop-color="#e5c24a"/><stop offset="1" stop-color="#b88a1c"/></linearGradient>
 <linearGradient id="gRed" x1="0" y1="0" x2="0" y2="1"><stop offset="0" stop-color="#d8403a"/><stop offset="1" stop-color="#a81e1c"/></linearGradient>
 <g id="imin"><path fill-rule="evenodd" d="M0 12 V3 q0-3 3-3 h22 q3 0 3 3 V12 Z M2 5.800 V10.200 H26 V5.800 Z" fill="#88929a"/><rect x="2" y="5.800" width="24" height="4.400" fill="#fff" opacity=".25"/></g>
 <g id="imax"><path fill-rule="evenodd" d="M0 24 V3 q0-3 3-3 h22 q3 0 3 3 V24 Z M2 6 V22.200 H26 V6 Z" fill="#88929a"/><rect x="2" y="6" width="24" height="16.200" fill="#fff" opacity=".12"/></g>
 <g id="mag" stroke="#a3adb3" stroke-linecap="round"><circle cx="0" cy="0" r="7.500" stroke-width="3.900"/><path d="M6 6 L14.400 13.600" stroke-width="4.900"/></g>
 <g id="xx" stroke="#b3b6b3" stroke-width="3.200"><path d="M-5.800 -5.800 L5.800 5.800 M5.800 -5.800 L-5.800 5.800"/></g>
 <g id="fold"><path d="M3 26 V5.800 q0-1.200 1-1.800 l8.500-3.600 q1.600-.6 2.800.2 l14 .4 q1.600.3 1.600 2 V24.600 q0 1.400-1.400 1.400z" fill="#e9e9e9" stroke="#c8a94e" stroke-width="1"/><path d="M.6 8.800 q0-1.600 1.600-1.600 H26 q1.500 0 1.500 1.600 V24.600 q0 1.500-1.500 1.500 H2.200 q-1.600 0-1.600-1.500z" fill="url(#gF3)" stroke="#c9962a" stroke-width="1.100"/></g>
 <g id="tbl2"><rect x=".6" y=".6" width="25.800" height="22.500" rx="2.500" fill="#fdfdfe" stroke="#a9b6cc" stroke-width="1.100"/><path d="M.6 5.500 V3 q0-2.400 2.400-2.400 h21 q2.400 0 2.400 2.400 V5.500z" fill="#cfe6f8"/><path d="M.6 5.700 H26.400 M.6 11.500 H26.400 M.6 17.300 H26.400 M7.200 5.700 V23 M13.600 5.700 V23 M20 5.700 V23" stroke="#cfd9e8" stroke-width="1"/></g>
 <g id="tbl"><rect x=".6" y=".6" width="25.800" height="22.500" rx="2.500" fill="#fdfdfe" stroke="#9fadc0" stroke-width="1.100"/><path d="M.6 5.500 V3 q0-2.400 2.400-2.400 h21 q2.400 0 2.400 2.400 V5.500z" fill="#ccd6e4"/><path d="M.6 5.700 H26.400 M.6 11.500 H26.400 M.6 17.300 H26.400 M7.200 5.700 V23 M13.600 5.700 V23 M20 5.700 V23" stroke="#a9b6c8" stroke-width="1"/></g>
</defs>
<!-- ===== Source pane ===== -->
<use href="#mag" x="159.200" y="306.600"/>
<use href="#xx" x="215.200" y="311.400"/>
<use href="#xx" x="518.700" y="311.400"/>
<!-- grid icon for tab -->
<g transform="translate(263.200,294)"><rect x=".6" y=".6" width="30.600" height="29.600" rx="3.500" fill="#fcfdfe" stroke="#9aa8ba" stroke-width="1.200"/><path d="M.6 5 V4 q0-3.400 3.400-3.400 h23.800 q3.400 0 3.400 3.400 V5z" fill="#cbd4e0"/><path d="M.8 5.200 H31 M.8 11.400 H31 M.8 17.600 H31 M.8 23.800 H31 M6.800 5.200 V30 M12.900 5.200 V30 M19 5.200 V30 M25.100 5.200 V30" stroke="#c3ccd9" stroke-width="1.100"/></g>
<!-- back/forward disabled -->
<path d="M148.800 357 L160.500 345.600 V351.800 H176.400 V362.300 H160.500 V368.600 Z" fill="#f2f5f7" stroke="#e1e5e8" stroke-width="1.100"/>
<path d="M217.300 357 L205.600 345.600 V351.800 H189.600 V362.300 H205.600 V368.600 Z" fill="#f2f5f7" stroke="#e1e5e8" stroke-width="1.100"/>
<!-- popout -->
<rect x="264" y="345.600" width="20.600" height="20.800" rx="3" fill="#fbfcfd" stroke="#a9b7ca" stroke-width="1.100"/>
<path d="M264 351.600 V348.600 q0-3 3-3 h14.600 q3 0 3 3 v3z" fill="#d5e8f9"/>
<path d="M256.200 363.300 L263.300 356.200 L260.300 353.200 H269.200 V362.100 L266.200 359.100 L259.100 366.200 Z" fill="#d3d9e0" stroke="#8e9cb0" stroke-width="1.100" stroke-linejoin="round"/>
<!-- filter funnel -->
<path d="M330.600 345.600 H351.600 L343.600 355.400 V361.600 L338.600 363.800 V355.400 Z" fill="url(#gFun)" stroke="#98a2ac" stroke-width="1.300" stroke-linejoin="round"/>
<!-- search mag -->
<use href="#mag" x="1599.400" y="351.500"/>
<use href="#imin" x="1754" y="314.200"/><use href="#imax" x="1790" y="302"/>
<!-- ===== Console pane ===== -->
<use href="#xx" x="395.100" y="1035.300"/>
<use href="#imin" x="1754" y="1038.300"/><use href="#imax" x="1790" y="1026.100"/>
<path d="M287.600 1087.200 q1-11.800 12.800-12.600 v-5.400 l10.200 8.800 -10.200 8.800 v-5.600 q-7.800-.2 -12.800 6z" fill="#eef0f2" stroke="#cfd3d7" stroke-width="1.100" stroke-linejoin="round"/>
<!-- console broom (light) -->
<g stroke="#c5cad0" stroke-width="1.100" fill="#eceef0"><path d="M1819.500 1063.800 L1821 1065.300 L1806 1081 L1803.500 1078.600 Z"/><path d="M1803 1078 L1807 1082 L1801.500 1093.200 q-9-.5 -18.500-5 q12-4.500 20-10.200z"/></g>
</svg>
<svg class="a" style="left:0;top:0;pointer-events:none" width="2448" height="1732" viewBox="0 0 2448 1732" fill="none">
<!-- ===== top right: logout + power ===== -->
<path d="M2222 187.800 V186 q0-3.500 -3.500-3.500 h-9.600 q-3.500 0 -3.500 3.500 v18.400 q0 3.500 3.500 3.500 h9.600 q3.500 0 3.500-3.500 v-1.800" stroke="#8fa3bd" stroke-width="2.200" fill="#fbfcfd"/>
<path d="M2216.400 192.200 h9 v-4.800 l9.400 7.800 -9.400 7.800 v-4.800 h-9z" fill="#9fb3cb"/>
<circle cx="2286.800" cy="195" r="13.200" fill="#e8754a" stroke="#d9633a" stroke-width="1"/>
<path d="M2281.600 189.200 a7.600 7.600 0 1 0 10.400 0" stroke="#fff" stroke-width="2.300" stroke-linecap="round"/>
<path d="M2286.800 186.200 V195.200" stroke="#fff" stroke-width="2.300" stroke-linecap="round"/>
<!-- project cube -->
<path d="M2104.400 232.400 L2118.800 237.800 V255.200 L2104.400 261.600 L2090 255.200 V237.800 Z" fill="#c6e7f4" stroke="#6fc0dc" stroke-width="1.200"/>
<path d="M2090 237.800 L2104.400 243.600 L2118.800 237.800 M2104.400 243.600 V261.600 M2090 255.200 L2104.400 249.800 L2118.800 255.200 M2104.400 232.400 V249.800" stroke="#8fcfe5" stroke-width=".9"/>
<text x="2098.400" y="251.200" font-family="Liberation Serif" font-size="19" fill="#2c63b4">R</text>
<!-- ===== Env pane ===== -->
<use href="#imin" x="2236" y="314"/><use href="#imax" x="2272" y="301.800"/>
<!-- open folder -->
<path d="M1870.200 368.200 V350.600 q0-1.300 1.300-1.300 h5.400 l3.300-3.800 h11 q1.200 0 2 1 l1.600 2.200 v19.900z" fill="#e8e9e9" stroke="#ba8f26" stroke-width="1.200" stroke-linejoin="round"/>
<path d="M1866.200 355.600 H1887.200 L1894.400 368.500 H1873.400 Z" fill="url(#gF2)" stroke="#bd922a" stroke-width="1.200" stroke-linejoin="round"/>
<path d="M1884.3 355.2 Q1888.5 347.4 1898.1 348.2 V344.9 L1906 351.4 L1898.1 358.2 V354.8 Q1892 353.6 1888 357 Z" fill="#2eb38b"/>
<!-- save -->
<rect x="1926.600" y="344.400" width="25.200" height="25.200" rx="3" fill="#7fb3dc" stroke="#6c9cc6" stroke-width="1"/>
<rect x="1929.800" y="345.200" width="18.300" height="10.800" fill="#fff"/>
<rect x="1932" y="360" width="13" height="9" fill="#fff"/>
<rect x="1934" y="362.200" width="4" height="6.800" fill="#7fb3dc"/>
<!-- import table + arrow -->
<use href="#tbl" x="1990" y="344.400"/>
<path d="M2003.8 357.6 Q2008 349.8 2017.6 350.6 V347.3 L2026 353.8 L2017.6 360.6 V357.2 Q2011.5 356 2007.5 359.4 Z" fill="#2eb38b"/>
<!-- broom -->
<ellipse cx="2261" cy="367.600" rx="14" ry="1.900" fill="#9aa3aa" opacity=".55"/>
<path d="M2272.500 337.700 L2275.300 340.500 L2266.500 350 L2263.700 347.300 Z" fill="#d9584e"/>
<path d="M2263 347.500 L2267.500 351.500 Q2266.600 358.500 2262.600 366.200 L2254 369.300 Q2249 363.500 2244 357.400 Q2256 354.600 2263 347.500 Z" fill="#e3c47f" stroke="#d2ab5c" stroke-width=".7"/>
<path d="M2257.200 352.600 L2265.400 359.500 M2254.400 355.400 L2263.800 363.200" stroke="#b37520" stroke-width="1.400"/>
<!-- list lines -->
<path d="M2299 347 H2320 M2299 353.200 H2320 M2299 359.400 H2320 M2299 365.600 H2320" stroke="#aab3ba" stroke-width="2"/>
<!-- global env icon -->
<rect x="1882" y="396" width="18" height="18" rx="3" fill="#6ba1e0"/>
<rect x="1876.200" y="386" width="17.600" height="18" rx="3" fill="#b86fc8"/>
<rect x="1870" y="392" width="18" height="18" rx="3" fill="#b0c783"/>
<use href="#mag" x="2181.400" y="402"/>
<!-- row icons -->
<use href="#tbl2" x="2255" y="473.400"/>
<use href="#mag" x="2263.300" y="525.600"/>
<use href="#mag" x="2263.300" y="567.600"/>
<use href="#mag" x="2263.300" y="609.600"/>
<!-- ===== Files pane ===== -->
<use href="#imin" x="2236" y="782.200"/><use href="#imax" x="2272" y="770"/>
<!-- new folder -->
<g transform="translate(1871.600,810.600)"><use href="#fold"/></g>
<circle cx="1876" cy="820" r="10" fill="#27ae80"/><path d="M1869.500 820 H1882.500 M1876 813.500 V826.500" stroke="#fff" stroke-width="3.600"/>
<!-- upload -->
<rect x="2074.500" y="813.200" width="21" height="24" fill="#fff" stroke="#aab4c8" stroke-width="1.100"/>
<circle cx="2072.900" cy="820.500" r="10" fill="url(#gGold)"/>
<path d="M2072.900 813.800 L2079.300 820.600 H2075.300 V826.600 H2070.500 V820.600 H2066.500 Z" fill="#fff"/>
<!-- delete -->
<rect x="2226.500" y="812.500" width="22.600" height="24.700" fill="#fff" stroke="#cdd4e0" stroke-width="1"/>
<circle cx="2226" cy="820.500" r="10" fill="url(#gRed)"/>
<path d="M2220.800 815.300 L2231.200 825.700 M2231.200 815.300 L2220.800 825.700" stroke="#fff" stroke-width="3.800"/>
<!-- home -->
<rect x="1908" y="862" width="24.600" height="17" fill="#f4f4f4" stroke="#9aa3ad" stroke-width="1.200"/>
<rect x="1916" y="866.200" width="7.400" height="12.800" fill="#b07a44"/>
<path d="M1903.800 866.800 L1920.200 850.600 L1936.600 866.800 L1934.200 869 L1920.200 855.400 L1906.200 869 Z" fill="#d83a30" stroke="#b72a22" stroke-width=".7"/>
<!-- folders -->
<g transform="translate(1926.200,932.600)"><use href="#fold"/></g>
<g transform="translate(1926.200,978.600)"><use href="#fold"/></g>
<g transform="translate(1926.200,1024.600)"><use href="#fold"/></g>
<g transform="translate(1926.200,1070.600)"><use href="#fold"/></g>
<g transform="translate(1926.200,1116.600)"><use href="#fold"/></g>
</svg>
</div>
</body></html>
